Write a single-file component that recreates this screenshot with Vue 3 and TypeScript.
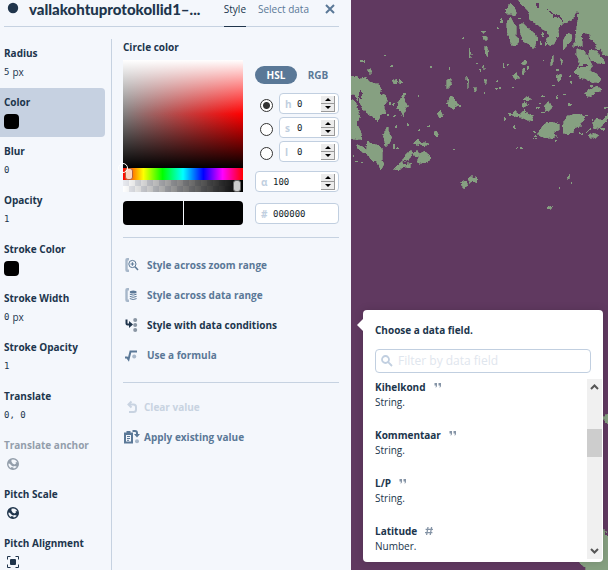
<script setup lang="ts">
import { ref } from 'vue'

interface StyleProperty {
  name: string
  kind: 'value' | 'swatch' | 'globe' | 'viewport'
  value?: string
  unit?: string
  disabled?: boolean
}

interface DataField {
  name: string
  type: 'String' | 'Number'
}

const properties: StyleProperty[] = [
  { name: 'Radius', kind: 'value', value: '5', unit: 'px' },
  { name: 'Color', kind: 'swatch' },
  { name: 'Blur', kind: 'value', value: '0' },
  { name: 'Opacity', kind: 'value', value: '1' },
  { name: 'Stroke Color', kind: 'swatch' },
  { name: 'Stroke Width', kind: 'value', value: '0', unit: 'px' },
  { name: 'Stroke Opacity', kind: 'value', value: '1' },
  { name: 'Translate', kind: 'value', value: '0, 0' },
  { name: 'Translate anchor', kind: 'globe', disabled: true },
  { name: 'Pitch Scale', kind: 'globe' },
  { name: 'Pitch Alignment', kind: 'viewport' },
]

const fields: DataField[] = [
  { name: 'Kihelkond', type: 'String' },
  { name: 'Kommentaar', type: 'String' },
  { name: 'L/P', type: 'String' },
  { name: 'Latitude', type: 'Number' },
]

const selected = ref('Color')
const channel = ref('h')
const channels = ref([
  { key: 'h', value: 0 },
  { key: 's', value: 0 },
  { key: 'l', value: 0 },
])
const alpha = ref(100)
const hue = ref(0)
const hex = ref('000000')
const query = ref('')

const landPatches: string[] = [
  '490,-20 810,-20 810,172 774,168 760,163 752,148 742,150 735,128 722,120 718,103 702,97 695,104 697,140 684,136 668,140 676,120 680,85 684,60 686,36 677,38 664,62 650,68 636,70 625,84 624,108 612,132 596,136 588,118 598,108 592,94 578,88 565,76 556,70 540,60 536,40 526,22 514,12',
  '468,28 482,10 494,22 500,44 490,48 484,42 470,42',
  '470,70 482,52 488,66 498,78 498,108 508,120 500,138 484,136 480,118 472,98',
  '508,74 520,70 532,84 548,96 560,112 556,134 548,148 536,132 520,124 512,102',
  '640,120 652,100 666,104 664,122 652,136 640,150',
  '680,146 700,152 716,174 727,198 718,212 738,220 754,238 746,248 722,246 706,236 688,232 672,212 684,200 690,188 680,166',
  '718,150 738,152 750,168 764,182 762,192 744,190 724,182 716,166',
  '702,278 722,268 740,258 754,266 750,274 734,276 724,290 710,288',
  '-20,232 20,228 28,238 48,232 56,244 72,250 88,252 92,270 88,280 108,290 112,304 102,318 108,340 90,348 82,362 70,350 54,344 50,332 38,330 30,304 16,282 -20,288',
  '-20,290 16,302 24,330 30,348 20,366 26,382 34,400 36,416 20,420 -20,410',
  '-20,258 40,258 72,290 62,330 42,318 24,306 10,280',
  '100,410 108,384 114,382 118,402 126,412 118,430 108,440 104,424',
  '52,424 66,432 86,436 98,450 96,478 102,494 92,510 84,488 68,484 54,466 34,454 22,444 20,434 38,440 50,450',
  '142,310 152,296 162,278 164,302 172,318 162,336 160,352 154,334 142,324',
  '128,240 140,238 140,252 130,250',
  '148,238 158,248 146,250',
  '290,240 304,236 304,252 290,268',
  '300,290 310,290 324,314 312,328 294,318 296,304',
  '262,340 272,330 278,350 270,356',
  '252,396 260,392 268,412 258,414',
  '190,430 202,418 214,430 226,428 238,434 216,438 206,434',
  '158,480 170,460 184,450 188,462 176,478 164,484',
  '190,460 200,452 210,464 198,472',
  '202,486 208,462 222,454 238,464 240,480 222,488 208,490',
  '130,508 142,496 156,484 160,494 182,490 180,504 160,500 150,510',
  '484,344 494,334 508,344 524,330 532,344 546,346 548,362 530,360 516,352 498,350',
  '520,298 530,290 542,296 534,304 520,302',
  '510,316 524,308 536,314 520,322',
  '566,394 580,376 594,366 614,368 628,374 628,390 610,394 620,408 606,416 580,412 566,406',
  '640,372 648,350 670,344 688,342 704,350 702,362 690,370 696,378 676,382 672,396 656,402 640,400',
  '728,370 740,354 754,362 774,340 800,340 800,356 774,356 762,370 750,384 734,386',
  '716,404 732,400 746,406 736,416 718,410',
  '586,320 594,304 600,316 608,320 596,334 588,334',
  '516,210 524,204 526,220 518,226',
  '488,226 500,218 508,234 494,236',
  '604,176 610,164 610,188 602,196',
  '632,174 638,182 634,194',
  '618,230 634,222 636,236 624,246',
  '332,544 346,542 354,554 344,566 334,556',
  '354,536 366,526 368,536 380,532 380,548 366,544 358,550',
  '590,626 596,620 608,618 600,626',
  '650,538 660,522 658,536',
  '398,108 410,110 412,120 402,120',
  '404,142 410,138 416,158 412,170 406,160',
  '358,148 364,162 358,178',
  '396,192 404,200 402,210',
  '402,238 410,240 408,254',
  '370,262 380,264 376,276',
  '350,228 356,242 354,270',
  '52,210 62,206 66,220 56,220',
  '392,94 404,94 402,100',
  '514,190 524,182 532,188 522,196',
  '757,1254 766,1244 800,1240 800,1274 774,1274 764,1262',
  '757,1588 766,1590 768,1608 800,1612 800,1740 706,1740 708,1704 690,1690 680,1670 757,1670',
]

// Small islets: x, y, width, height
const islets: number[][] = [
  [101, 162, 4, 6], [30, 181, 14, 4], [124, 195, 6, 5], [239, 198, 6, 10], [335, 113, 6, 4], [296, 201, 5, 8],
  [203, 284, 4, 10], [116, 306, 6, 12], [128, 344, 8, 8], [112, 340, 6, 10], [170, 370, 8, 7], [128, 308, 8, 6],
  [232, 374, 8, 6], [204, 388, 5, 4], [408, 392, 4, 7], [310, 446, 5, 4], [498, 440, 7, 5], [510, 441, 6, 5],
  [130, 432, 5, 16], [142, 440, 6, 6], [16, 482, 8, 5], [32, 484, 6, 6], [8, 464, 5, 8], [458, 190, 5, 14],
  [474, 192, 4, 6], [440, 236, 5, 10], [445, 262, 8, 5], [486, 260, 6, 5], [436, 264, 5, 6], [402, 276, 4, 10],
  [578, 180, 8, 4], [574, 284, 12, 6], [618, 286, 5, 10], [618, 208, 8, 6], [640, 282, 8, 4], [654, 312, 12, 5],
  [656, 224, 6, 6], [762, 320, 8, 8], [490, 376, 6, 10], [476, 340, 8, 7], [462, 354, 6, 5], [550, 396, 8, 4],
  [556, 404, 6, 6], [550, 414, 10, 4], [612, 422, 12, 4], [626, 562, 5, 5], [662, 548, 4, 10], [286, 372, 4, 4],
  [386, 206, 6, 8], [378, 188, 5, 4], [326, 314, 6, 6], [288, 306, 5, 8], [442, 82, 4, 4], [706, 392, 8, 4],
  [718, 384, 6, 5], [688, 398, 10, 4], [754, 384, 10, 5], [722, 356, 8, 6], [706, 344, 12, 5], [558, 322, 10, 4],
  [566, 308, 8, 4], [572, 336, 12, 4], [512, 344, 18, 6], [534, 350, 14, 4], [556, 112, 8, 10], [574, 100, 8, 12],
  [570, 122, 6, 12], [584, 128, 6, 6], [454, 52, 5, 16], [476, 52, 6, 8], [504, 54, 8, 4], [606, 254, 8, 5],
  [660, 242, 5, 6], [720, 256, 8, 5], [532, 198, 6, 10], [136, 376, 6, 8], [160, 278, 8, 8], [176, 272, 5, 4],
]

// Inlets cut back into the land
const inlets: string[] = [
  '558,8 566,10 568,26 560,22',
  '592,28 614,44 628,44 640,64 632,58 624,50 610,50',
  '30,268 38,280 34,300 26,290 28,330 22,306',
  '706,190 716,196 704,200 684,200',
  '34,340 46,352 60,352 44,360 30,356',
]
</script>

<template>
  <div class="studio">
    <main class="panel">
      <header class="panel-head">
        <svg class="layer-dot" viewBox="0 0 12 12" aria-hidden="true"><circle cx="6" cy="6" r="5.2" /></svg>
        <h1>vallakohtuprotokollid1–...</h1>
        <nav class="tabs">
          <a href="#style" class="tab current">Style</a>
          <a href="#data" class="tab">Select data</a>
        </nav>
        <button class="close" type="button" aria-label="Close">
          <svg viewBox="0 0 10 10"><path d="M1 1L9 9M9 1L1 9" /></svg>
        </button>
      </header>

      <div class="panel-body">
        <div class="props">
          <button
            v-for="p in properties"
            :key="p.name"
            type="button"
            class="prop"
            :class="{ selected: p.name === selected, muted: p.disabled }"
            :disabled="p.disabled"
            @click="selected = p.name"
          >
            <span class="prop-name">{{ p.name }}</span>
            <span class="prop-value">
              <template v-if="p.kind === 'value'"><span class="mono">{{ p.value }}</span><span v-if="p.unit" class="unit">{{ p.unit }}</span></template>
              <span v-else-if="p.kind === 'swatch'" class="swatch"></span>
              <svg v-else-if="p.kind === 'globe'" class="prop-icon" viewBox="0 0 12 12">
                <circle cx="6" cy="6" r="5.3" fill="none" stroke="currentColor" stroke-width="1.4" />
                <path d="M1 3L4.6 1L4.4 3.6L5.6 5.6L7.4 6.4L9 5.6L8.6 4L11 4.4L11.2 8L9.6 8.8L8 8L6 8.6L4.4 7.4L2.8 5.8L1 5.6Z" fill="currentColor" />
                <path d="M4.2 9L6.4 9.6L6.6 11.4L4 11Z" fill="currentColor" />
              </svg>
              <svg v-else class="prop-icon" viewBox="0 0 12 12">
                <path d="M.5 3.5V.5H3.5M8.5 .5H11.5V3.5M11.5 8.5V11.5H8.5M3.5 11.5H.5V8.5" fill="none" stroke="currentColor" stroke-width="1" />
                <rect x="3" y="3" width="6" height="6" rx="1" fill="currentColor" />
              </svg>
            </span>
          </button>
        </div>

        <section class="editor">
          <h2>Circle color</h2>
          <div class="picker">
            <div class="picker-left">
              <div class="field"><span class="field-mark"></span></div>
              <input v-model="hue" class="slider hue" type="range" min="0" max="360" aria-label="Hue" />
              <input v-model="alpha" class="slider alpha" type="range" min="0" max="100" aria-label="Alpha" />
              <div class="compare"><span></span><span></span></div>
            </div>
            <div class="picker-right">
              <div class="modes">
                <button type="button" class="mode active">HSL</button>
                <button type="button" class="mode">RGB</button>
              </div>
              <div class="channels">
                <div v-for="c in channels" :key="c.key" class="channel">
                  <input v-model="channel" type="radio" name="channel" :value="c.key" :aria-label="'Channel ' + c.key" />
                  <div class="box">
                    <label :for="'in-' + c.key">{{ c.key }}</label>
                    <input :id="'in-' + c.key" v-model.number="c.value" type="text" inputmode="numeric" />
                    <span class="spin">
                      <button type="button" aria-label="Increase" @click="c.value++"><svg viewBox="0 0 6 3"><path d="M0 3L3 0L6 3Z" /></svg></button>
                      <button type="button" aria-label="Decrease" @click="c.value--"><svg viewBox="0 0 6 3"><path d="M0 0L3 3L6 0Z" /></svg></button>
                    </span>
                  </div>
                </div>
              </div>
              <div class="box wide">
                <label for="in-a">α</label>
                <input id="in-a" v-model="alpha" type="text" inputmode="numeric" />
                <span class="spin">
                  <button type="button" aria-label="Increase" @click="alpha++"><svg viewBox="0 0 6 3"><path d="M0 3L3 0L6 3Z" /></svg></button>
                  <button type="button" aria-label="Decrease" @click="alpha--"><svg viewBox="0 0 6 3"><path d="M0 0L3 3L6 0Z" /></svg></button>
                </span>
              </div>
              <div class="box wide hex">
                <label for="in-hex">#</label>
                <input id="in-hex" v-model="hex" type="text" />
              </div>
            </div>
          </div>

          <div class="actions">
            <button type="button" class="action">
              <svg viewBox="0 0 14 14">
                <path d="M4 1.2H2.2Q1.5 1.2 1.5 2V12Q1.5 12.8 2.2 12.8H4" class="soft-line" />
                <circle cx="7.4" cy="6" r="3.6" class="line" />
                <path d="M10 8.8L13 12" class="line thick" />
                <path d="M5.6 6H9.2M7.4 4.2V7.8" class="line" />
              </svg>
              Style across zoom range
            </button>
            <button type="button" class="action">
              <svg viewBox="0 0 14 14">
                <path d="M4 1.2H2.2Q1.5 1.2 1.5 2V12Q1.5 12.8 2.2 12.8H4" class="soft-line" />
                <ellipse cx="8.2" cy="4" rx="3.4" ry="1.5" class="solid" />
                <path d="M4.8 6.2Q8.2 8 11.6 6.2M4.8 8.4Q8.2 10.2 11.6 8.4M4.8 10.6Q8.2 12.4 11.6 10.6" class="line" />
              </svg>
              Style across data range
            </button>
            <button type="button" class="action active">
              <svg viewBox="0 0 14 14">
                <path d="M1.5 1.5V5.5Q1.5 6.5 2.5 6.5H4.5" class="line fat" />
                <path d="M4 3L8 6.5L4 10Z" class="solid" />
                <circle cx="10.2" cy="2" r="2" class="soft" />
                <circle cx="10.2" cy="7" r="2" class="soft" />
                <circle cx="10.2" cy="12" r="2" class="soft" />
              </svg>
              Style with data conditions
            </button>
            <button type="button" class="action">
              <svg viewBox="0 0 14 14">
                <path d="M0 9.5H2L3.5 11.5L5.5 3.5H12" class="line fat" />
                <circle cx="9.2" cy="8.6" r="2" class="soft" />
              </svg>
              Use a formula
            </button>
          </div>

          <div class="actions tight">
            <button type="button" class="action faded" disabled>
              <svg viewBox="0 0 16 14">
                <path d="M5 4.5H9.5Q12 4.5 12 7V9.5Q12 12 9.5 12H5" class="line fat" />
                <path d="M7.5 1.5L4.5 4.5L7.5 7.5" class="line fat" />
              </svg>
              Clear value
            </button>
            <button type="button" class="action">
              <svg viewBox="0 0 16 14">
                <path d="M0 2.5H2.5V1H6.5V2.5H9V13.5H0ZM2 5V11.5H7V5Z" class="solid" fill-rule="evenodd" />
                <path d="M3 6.5H6M3 8.5H6M3 10.3H5" class="line" />
                <path d="M8.5 1H11Q13 1 13 3V4" class="line fat" />
                <path d="M10 4H16L13 7.5Z" class="solid" />
                <circle cx="13" cy="11.2" r="2" class="soft" />
              </svg>
              Apply existing value
            </button>
          </div>
        </section>
      </div>
    </main>

    <aside class="map">
      <svg class="map-art" viewBox="3 0 771 1710" preserveAspectRatio="xMinYMin slice" aria-hidden="true">
        <defs>
          <filter id="ragged" filterUnits="userSpaceOnUse" x="-20" y="-20" width="820" height="1760">
            <feTurbulence type="fractalNoise" baseFrequency="0.1" numOctaves="3" seed="7" result="noise" />
            <feDisplacementMap in="SourceGraphic" in2="noise" scale="9" xChannelSelector="R" yChannelSelector="G" />
          </filter>
        </defs>
        <g filter="url(#ragged)" shape-rendering="crispEdges">
          <polygon v-for="(points, i) in landPatches" :key="'p' + i" class="land coast" :points="points" />
          <rect v-for="(r, i) in islets" :key="'r' + i" class="land" :x="r[0]" :y="r[1]" :width="r[2]" :height="r[3]" />
          <polygon v-for="(points, i) in inlets" :key="'i' + i" class="sea" :points="points" />
        </g>
      </svg>

      <section class="popover">
        <h3>Choose a data field.</h3>
        <div class="search">
          <svg viewBox="0 0 12 12" aria-hidden="true">
            <circle cx="4.5" cy="4.5" r="3.5" /><path d="M7.2 7.2L11 11" />
          </svg>
          <input v-model="query" type="text" placeholder="Filter by data field" aria-label="Filter by data field" />
        </div>
        <div class="list">
          <ul>
            <li v-for="f in fields" :key="f.name">
              <div class="field-name">
                <strong>{{ f.name }}</strong>
                <svg v-if="f.type === 'String'" class="type-icon" viewBox="0 0 10 10">
                  <path d="M1.5 1H4V3.5Q4 5 3 5.5H2.4Q3 4.5 2.8 3.5H1.5ZM5.5 1H8V3.5Q8 5 7 5.5H6.4Q7 4.5 6.8 3.5H5.5Z" fill="currentColor" />
                </svg>
                <svg v-else class="type-icon" viewBox="0 0 10 10">
                  <path d="M4 1L2.6 9M7.6 1L6.2 9M1.6 3.4H9M1 6.6H8.4" fill="none" stroke="currentColor" stroke-width="1.3" />
                </svg>
              </div>
              <p>{{ f.type }}.</p>
            </li>
          </ul>
          <div class="scrollbar">
            <svg viewBox="0 0 15 16"><path d="M4 10L7.5 6.5L11 10" /></svg>
            <span class="thumb"></span>
            <svg viewBox="0 0 15 16"><path d="M4 6L7.5 9.5L11 6" /></svg>
          </div>
        </div>
      </section>
    </aside>
  </div>
</template>

<style>
body {
  margin: 0;
  overflow: hidden;
}
</style>

<style scoped>
.studio {
  display: flex;
  height: 100vh;
  overflow: hidden;
  background: #f4f7fc;
  color: #20354c;
  font: 10px/16px "Open Sans", "Noto Sans", sans-serif;
}
.studio * {
  box-sizing: border-box;
}
button,
input {
  font: inherit;
  color: inherit;
  border: 0;
  padding: 0;
  margin: 0;
  background: none;
  text-align: left;
}
h1, h2, h3, p, ul {
  margin: 0;
  padding: 0;
}
ul {
  list-style: none;
}
.panel {
  flex: 0 0 351px;
  overflow: hidden;
}
.panel-head {
  display: flex;
  height: 27px;
  margin: 0 12px 12px 4px;
  padding-left: 3px;
  border-bottom: 1px solid #c6d2e1;
}
.layer-dot {
  width: 12px;
  height: 12px;
  margin-top: 2px;
  fill: #20354c;
}
h1 {
  flex: 1;
  margin-left: 10px;
  font: 900 15px/18px Lato, sans-serif;
  white-space: nowrap;
}
.tabs {
  display: flex;
  gap: 12px;
}
.tab {
  height: 27px;
  line-height: 18px;
  white-space: nowrap;
  color: #5a7897;
  text-decoration: none;
}
.tab.current {
  color: #20354c;
  border-bottom: 1px solid #20354c;
}
.close {
  width: 10px;
  height: 18px;
  margin: 0 4px 0 16px;
}
.close svg {
  display: block;
  width: 10px;
  height: 10px;
  fill: none;
  stroke: #5a7897;
  stroke-width: 2;
}
.panel-body {
  display: flex;
}
.props {
  flex: 0 0 112px;
  padding-right: 6px;
  border-right: 1px solid #c6d2e1;
}
.prop {
  display: block;
  width: 100%;
  height: 49px;
  padding: 5px 0 8px 4px;
  border-radius: 0 4px 4px 0;
  white-space: nowrap;
}
.prop.selected {
  background: #c6d1e1;
}
.prop.muted {
  color: #939eab;
}
.prop-name {
  display: block;
  font-weight: 700;
  line-height: 18px;
}
.prop-value {
  display: flex;
  align-items: center;
  gap: 3px;
  height: 16px;
  margin-top: 2px;
}
.mono {
  font: 9px/16px "DejaVu Sans Mono", monospace;
}
.swatch {
  width: 15px;
  height: 15px;
  border-radius: 4px;
  background: #000;
}
.prop-icon {
  width: 12px;
  height: 12px;
  margin-left: 3px;
}
.editor {
  flex: 1;
  margin: 0 12px 0 11px;
}
h2, h3 {
  font-size: 10px;
  font-weight: 700;
  line-height: 16px;
}
.picker {
  display: flex;
  gap: 12px;
  margin-top: 5px;
  padding-bottom: 12px;
  border-bottom: 1px solid #c6d2e1;
}
.picker-left {
  flex: 0 0 120px;
}
.field {
  position: relative;
  height: 108px;
  background:
    linear-gradient(to bottom, #fff, rgba(255, 255, 255, 0) 50%, rgba(0, 0, 0, 0) 50%, #000),
    linear-gradient(to right, #808080, #f00);
}
.field-mark {
  position: absolute;
  left: -5px;
  bottom: -5px;
  width: 10px;
  height: 10px;
  border: 1px solid #fff;
  border-radius: 50%;
  z-index: 1;
}
.slider {
  display: block;
  width: 100%;
  height: 12px;
  padding: 0 2px;
  appearance: none;
}
.slider::-webkit-slider-thumb {
  appearance: none;
  width: 8px;
  height: 12px;
  border: 1px solid #666;
  border-radius: 3px;
  background: #ccc;
}
.hue {
  background: linear-gradient(to right, #f00, #ff0 17%, #0f0 33%, #0ff 50%, #00f 67%, #f0f 83%, #f00);
}
.hue::-webkit-slider-thumb {
  border-color: #b4623c;
  background: #fcd5c4;
}
.alpha {
  background:
    linear-gradient(to right, rgba(0, 0, 0, 0), #000),
    repeating-conic-gradient(#fff 0 25%, #e8eaf0 0 50%) 0 0 / 12px 12px;
}
.compare {
  display: flex;
  gap: 1px;
  height: 24px;
  margin-top: 9px;
  border-radius: 4px;
  overflow: hidden;
}
.compare span {
  flex: 1;
  background: #000;
}
.picker-right {
  flex: 1;
  padding-top: 6px;
}
.modes {
  display: flex;
}
.mode {
  flex: 1;
  height: 18px;
  border-radius: 9px;
  color: #5a7897;
  font-weight: 700;
  text-align: center;
}
.mode.active {
  color: #fff;
  background: #5a7897;
}
.channels {
  display: grid;
  gap: 3px;
  margin: 9px 0;
}
.channel {
  display: flex;
  align-items: center;
  gap: 6px;
  padding-left: 5px;
}
.channel > input {
  flex: none;
  width: 13px;
  height: 13px;
  margin-top: 3px;
  appearance: none;
  border: 1px solid #333;
  border-radius: 50%;
  background: #fff;
}
.channel > input:checked {
  background: radial-gradient(circle, #333 3px, #fff 4px);
}
.box {
  display: flex;
  flex: 1;
  align-items: center;
  min-width: 0;
  height: 21px;
  padding: 0 3px 0 5px;
  border: 1px solid #c1cfe0;
  border-radius: 4px;
  background: #fff;
}
.box label {
  width: 12px;
  color: #c1cfe0;
  font-weight: 700;
}
.box input {
  flex: 1;
  width: 0;
  min-width: 0;
  color: #111c28;
  font: 9px/16px "DejaVu Sans Mono", monospace;
}
.hex {
  margin-top: 11px;
}
.spin {
  display: grid;
  width: 14px;
}
.spin button {
  display: flex;
  align-items: center;
  justify-content: center;
  height: 8px;
  background: #ececec;
  border-right: 1px solid #999;
  border-bottom: 1px solid #999;
}
.spin svg {
  width: 6px;
  height: 3px;
  fill: #000;
}
.actions {
  display: grid;
  gap: 12px;
  padding: 18px 0;
  border-bottom: 1px solid #c6d2e1;
}
.actions.tight {
  padding-top: 15px;
  border: 0;
}
.action {
  display: flex;
  align-items: center;
  gap: 8px;
  height: 18px;
  padding-left: 2px;
  color: #5a7897;
  font-weight: 700;
  white-space: nowrap;
}
.action svg {
  flex: none;
  width: 14px;
  height: 14px;
}
.tight .action {
  gap: 4px;
  padding-left: 1px;
}
.tight .action svg {
  width: 16px;
}
.action.active {
  color: #20354c;
}
.action.faded {
  color: #c8d3e1;
}
.line {
  fill: none;
  stroke: currentColor;
  stroke-width: 1;
}
.line.thick {
  stroke-width: 1.5;
}
.line.fat {
  stroke-width: 2;
}
.solid {
  fill: currentColor;
}
.soft {
  fill: currentColor;
  opacity: 0.5;
}
.soft-line {
  fill: none;
  stroke: currentColor;
  stroke-width: 2.4;
  opacity: 0.5;
}
.map {
  position: relative;
  flex: 1;
  min-width: 257px;
  background: #603960;
}
.map-art {
  display: block;
  width: 100%;
  height: 100%;
}
.land {
  fill: #86a081;
}
.coast {
  stroke: #86a081;
  stroke-width: 2;
}
.sea {
  fill: #603960;
}
.popover {
  position: absolute;
  left: 12px;
  right: 5px;
  bottom: 8px;
  padding: 12px 1px 3px 12px;
  border-radius: 4px;
  background: #fff;
  box-shadow: 0 0 8px rgba(0, 0, 0, 0.15);
}
.popover::before {
  content: "";
  position: absolute;
  left: -6px;
  top: 9px;
  border: 6px solid transparent;
  border-left: 0;
  border-right-color: #fff;
}
.search {
  display: flex;
  align-items: center;
  height: 24px;
  margin: 11px 11px 6px 0;
  padding-left: 5px;
  border: 1px solid #c1cfe0;
  border-radius: 4px;
}
.search svg {
  width: 12px;
  height: 12px;
  margin-right: 5px;
  fill: none;
  stroke: #c1cfe0;
  stroke-width: 1.8;
}
.search input {
  flex: 1;
  min-width: 0;
  font-size: 12px;
}
.search input::placeholder {
  color: #dfe6ee;
}
.list {
  display: flex;
  height: 180px;
  overflow: hidden;
}
.list ul {
  flex: 1;
}
.list li {
  height: 48px;
}
.field-name {
  display: flex;
  align-items: center;
  gap: 7px;
}
.list p {
  line-height: 15px;
}
.type-icon {
  width: 10px;
  height: 10px;
  color: #8594a6;
}
.scrollbar {
  display: flex;
  flex-direction: column;
  width: 15px;
  background: #f0f0f0;
}
.scrollbar svg {
  width: 15px;
  height: 16px;
  fill: none;
  stroke: #555;
  stroke-width: 2;
}
.thumb {
  height: 28px;
  margin: 34px 0 auto;
  background: #cdcdcd;
}
</style>
